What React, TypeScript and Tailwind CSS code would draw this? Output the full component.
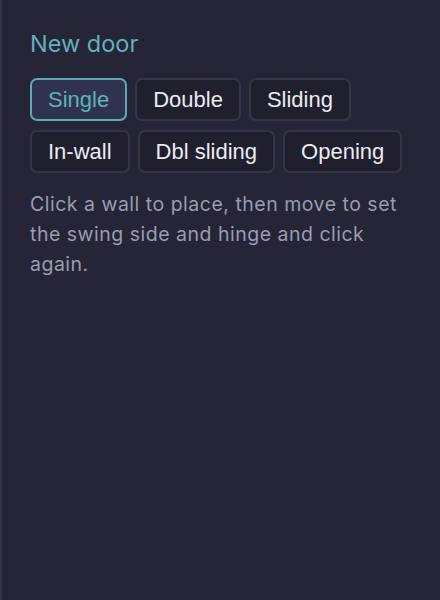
const TYPES = ["Single", "Double", "Sliding", "In-wall", "Dbl sliding", "Opening"];

export default function App() {
  const selected = "Single";

  return (
    <div className="h-[600px] w-[440px] border-l-2 border-[#34344a] bg-[#252537] px-7 pt-[28px] font-['Inter',sans-serif]">
      <h2 className="text-[23.5px] leading-8 font-normal text-[#5fb2b8]">New door</h2>

      <div className="mt-[18px] flex flex-wrap gap-x-2 gap-y-[9px]">
        {TYPES.map((t) =>
          t === selected ? (
            <button
              key={t}
              className="h-[43px] rounded-[7px] border-2 border-[#5fa9b0] bg-[#2f3350] px-4 font-['Liberation_Sans',Arial,sans-serif] text-[22px] text-[#5fb2b8]"
            >
              {t}
            </button>
          ) : (
            <button
              key={t}
              className="h-[43px] rounded-[7px] border-2 border-[#353547] bg-[#1f1f2e] px-4 font-['Liberation_Sans',Arial,sans-serif] text-[22px] text-[#ececf2]"
            >
              {t}
            </button>
          )
        )}
      </div>

      <p className="mt-[16px] text-[19.5px] leading-[30px] tracking-[0.5px] text-[#9b9bb0]">
        Click a wall to place, then move to set the swing side and hinge and click again.
      </p>
    </div>
  );
}
